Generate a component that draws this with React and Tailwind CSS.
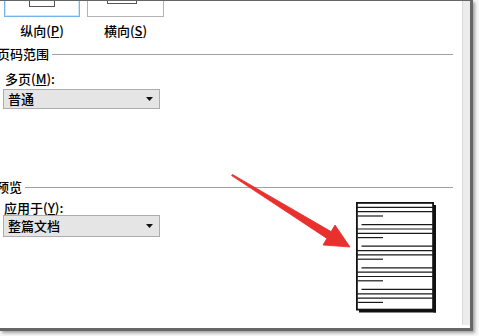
import React from 'react';

const font = "font-['Noto_Sans_CJK_SC','Microsoft_YaHei',sans-serif]";

function Select({ value }) {
  return (
    <div className="ml-[3px] w-[157px] h-full flex items-center justify-between border border-[#adadad] bg-[#e5e5e5] pl-[4px] pr-[6px]">
      <span className="text-[13px] leading-[16px] font-medium text-black">{value}</span>
      <svg width="7" height="4" viewBox="0 0 7 4">
        <polygon points="0,0 7,0 3.5,4" fill="#111" />
      </svg>
    </div>
  );
}

function SectionTitle({ text, offset, gap }) {
  return (
    <div className="flex items-center h-[16px] pr-[9px]">
      <span className={`text-[13px] leading-[16px] font-medium text-black whitespace-nowrap ${offset}`}>{text}</span>
      <div className={`flex-1 h-px bg-[#a0a0a0] ${gap}`} />
    </div>
  );
}

function PagePreview() {
  const starts = [1, 22.6, 44.2, 65.8, 87.4];
  return (
    <svg width="80" height="111" viewBox="0 0 80 111" className="block">
      <rect x="77.5" y="3" width="2.5" height="107.5" fill="#111" />
      <rect x="3" y="108" width="77" height="2.5" fill="#111" />
      <rect x="0.9" y="0.9" width="76.2" height="106.7" fill="#fff" stroke="#111" strokeWidth="1.8" />
      {starts.map((p, i) => (
        <g key={i} stroke="#1a1a1a" strokeWidth="1.2">
          {i > 0 && <line x1="5.5" y1={p} x2="77" y2={p} />}
          <line x1="1" y1={p + 4.4} x2="77" y2={p + 4.4} />
          <line x1="1" y1={p + 8.7} x2="77" y2={p + 8.7} />
          <line x1="1.5" y1={p + 13} x2="27" y2={p + 13} />
        </g>
      ))}
    </svg>
  );
}

export default function App() {
  return (
    <div className={`relative w-[479px] h-[336px] bg-[#f7f7f7] overflow-hidden ${font}`}>
      {/* dialog */}
      <div className="w-[473px] h-[331px] bg-white border-t border-r-[3px] border-b-[3px] border-[#666] shadow-[2px_2px_3px_rgba(0,0,0,0.35)] flex">
        <div className="w-[462px] flex flex-col">
          {/* orientation buttons */}
          <div className="h-[16px] overflow-hidden flex items-end">
            <div className="ml-[4px] w-[76px] h-[40px] shrink-0 border border-[#7ab3e8] shadow-[inset_0_0_0_1px_#cfe5f8] bg-white flex items-end pl-[24px] pb-[9px]">
              <div className="w-[26px] h-[30px] border border-[#555] bg-white" />
            </div>
            <div className="ml-[7px] w-[77px] h-[40px] shrink-0 border border-[#b4b4b4] bg-white flex items-end pl-[19px] pb-[12px]">
              <div className="w-[30px] h-[26px] border border-[#555] bg-white" />
            </div>
          </div>
          <div className="mt-[6px] flex text-[13px] leading-[16px] font-medium text-black">
            <div className="ml-[4px] w-[76px] text-center">纵向(<span className="underline">P</span>)</div>
            <div className="ml-[7px] w-[77px] text-center">横向(<span className="underline">S</span>)</div>
          </div>

          {/* page range */}
          <div className="mt-[7px]">
            <SectionTitle text="页码范围" offset="-ml-[3px]" gap="ml-[3px]" />
          </div>
          <div className="mt-[9px] ml-[5px] text-[13px] leading-[16px] font-medium text-black">
            多页(<span className="underline">M</span>):
          </div>
          <div className="mt-[2px] h-[20px]">
            <Select value="普通" />
          </div>

          {/* preview */}
          <div className="mt-[70px]">
            <SectionTitle text="预览" offset="-ml-[4px]" gap="ml-[3px]" />
          </div>
          <div className="flex">
            <div className="flex flex-col">
              <div className="mt-[6px] ml-[4px] h-[14px] text-[13px] leading-[14px] font-medium text-black">
                应用于(<span className="underline">Y</span>):
              </div>
              <div className="h-[22px]">
                <Select value="整篇文档" />
              </div>
            </div>
            <div className="ml-auto mr-[26px] mt-[7px]">
              <PagePreview />
            </div>
          </div>
        </div>
        {/* side strip */}
        <div className="flex-1 bg-[#ececec] border-l border-[#dadada] mb-[3px]" />
      </div>

      {/* red annotation arrow */}
      <svg className="absolute left-0 top-0 pointer-events-none" width="479" height="336" viewBox="0 0 479 336">
        <polygon
          points="232.4,174.4 331.1,231.6 335,225 350,247 323,245 326.9,238.4 231.6,175.6"
          fill="#e8302c"
          stroke="#e8302c"
          strokeWidth="0.8"
          strokeLinejoin="round"
        />
      </svg>
    </div>
  );
}
